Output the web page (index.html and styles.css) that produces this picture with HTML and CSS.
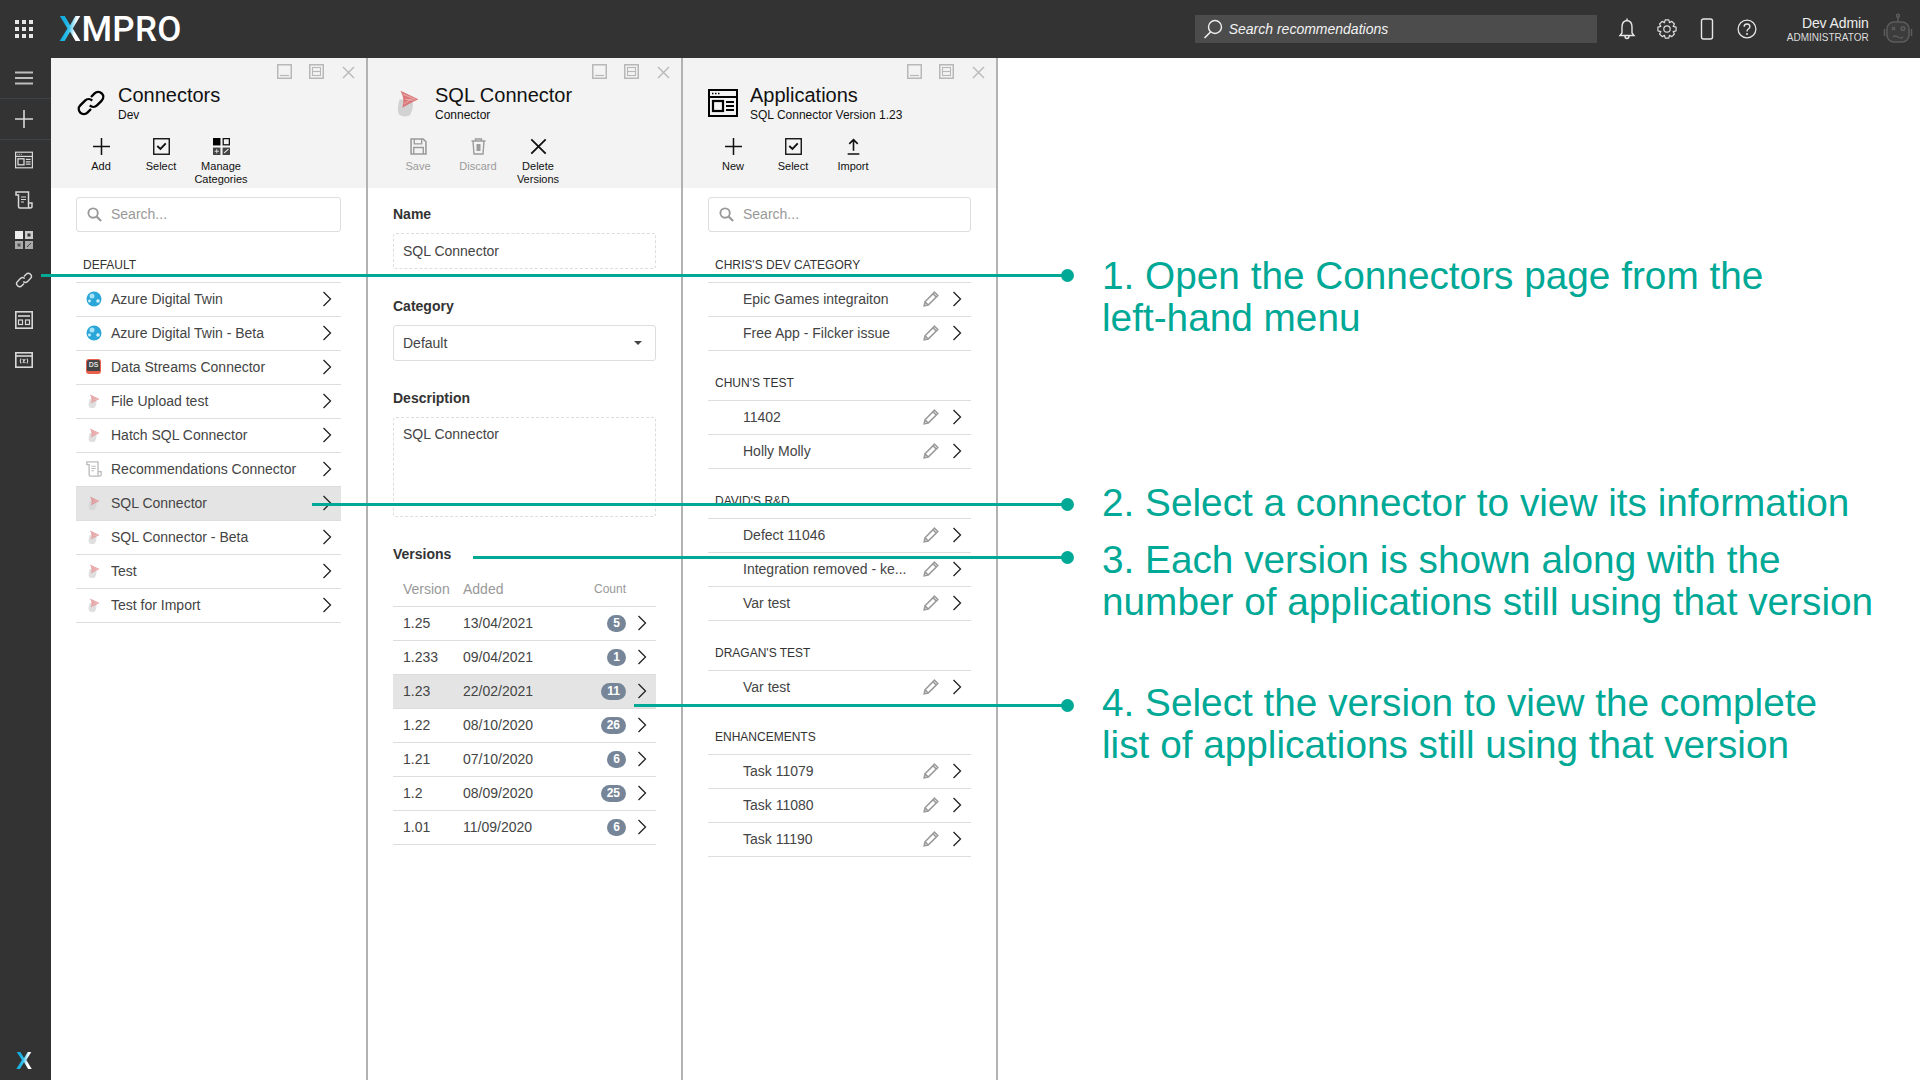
FILE: index.html
```html
<!DOCTYPE html>
<html lang="en">
<head>
<meta charset="utf-8">
<title>Connectors</title>
<link rel="stylesheet" href="styles.css">
</head>
<body>
<svg class="defs" width="0" height="0" aria-hidden="true">
  <symbol id="chev" viewBox="0 0 10 16"><path d="M1.5 1 8.5 8 1.5 15" fill="none" stroke="currentColor" stroke-width="1.3"/></symbol>
  <symbol id="pencil" viewBox="0 0 16 16"><path d="M11.5 1.2 14.8 4.5 5.2 14 1.2 14.8 2 10.8ZM2 10.8 5.2 14M10 2.8 13.2 6" fill="none" stroke="currentColor" stroke-width="1.6"/></symbol>
  <symbol id="mag" viewBox="0 0 16 16"><circle cx="6.5" cy="6.5" r="5" fill="none" stroke="currentColor" stroke-width="2"/><path d="M10.2 10.2 15 15" stroke="currentColor" stroke-width="2.2"/></symbol>
  <symbol id="min" viewBox="0 0 15 15"><rect x=".75" y=".75" width="13.5" height="13.5" fill="none" stroke="currentColor" stroke-width="1.5"/><path d="M3 11.5H12" stroke="currentColor" stroke-width="1.2"/></symbol>
  <symbol id="max" viewBox="0 0 15 15"><rect x=".75" y=".75" width="13.5" height="13.5" fill="none" stroke="currentColor" stroke-width="1.5"/><rect x="3.5" y="3.5" width="8" height="8" fill="none" stroke="currentColor" stroke-width="1.1"/><path d="M3.5 7.5H11.5" stroke="currentColor" stroke-width="1.1"/></symbol>
  <symbol id="close" viewBox="0 0 13 13"><path d="M1 1 12 12M12 1 1 12" stroke="currentColor" stroke-width="1.4"/></symbol>
  <symbol id="plus" viewBox="0 0 18 18"><path d="M9 0V18M0 9H18" stroke="currentColor" stroke-width="1.6"/></symbol>
  <symbol id="check" viewBox="0 0 16 16"><rect x=".7" y=".7" width="14.6" height="14.6" fill="none" stroke="currentColor" stroke-width="1.3"/><path d="M4 7.5 7 10.3 12 5" fill="none" stroke="currentColor" stroke-width="1.8"/></symbol>
  <symbol id="cats" viewBox="0 0 16 16"><rect width="7" height="7"/><rect x="9.6" y=".6" width="5.8" height="5.8" fill="none" stroke="currentColor" stroke-width="1.2"/><rect y="9" width="7" height="7" fill="#444"/><path d="M1.5 12.5H5.5M3.5 10.5V14.5" stroke="#eee" stroke-width=".8"/><rect x="9" y="9" width="7" height="7" fill="#444"/><path d="M10.5 14 14.5 10.5" stroke="#eee" stroke-width="1"/></symbol>
  <symbol id="link" viewBox="0 0 32 32"><g transform="rotate(-45 16 16) translate(16 16) scale(.9) translate(-16 -16)" fill="none" stroke="currentColor" stroke-width="2.8"><path d="M11 21H5a6 6 0 0 1 0-12H13a6 6 0 0 1 6 6"/><path d="M21 11H27a6 6 0 0 1 0 12H19a6 6 0 0 1-6-6"/></g></symbol>
  <symbol id="apps" viewBox="0 0 30 28"><rect x="1" y="1" width="28" height="26" fill="none" stroke="currentColor" stroke-width="2"/><path d="M1 8H29" stroke="currentColor" stroke-width="2"/><path d="M4 4.5H5.5M7 4.5H8.5M10 4.5H11.5" stroke="currentColor" stroke-width="1.5"/><rect x="5" y="12" width="10" height="10" fill="none" stroke="currentColor" stroke-width="2.2"/><path d="M18 13H26M18 17H26M18 21H26" stroke="currentColor" stroke-width="2"/></symbol>
  <symbol id="scroll" viewBox="0 0 18 18"><path d="M1 1H13.5V15.5Q13.5 17 15 17H5Q3.5 17 3.5 15.5V4H1ZM13.5 12H17V15.5Q17 17 15 17" fill="none" stroke="currentColor" stroke-width="1.5"/><path d="M6 6H11M6 8.5H11M6 11H9" stroke="currentColor" stroke-width="1.2"/></symbol>
  <symbol id="tiles" viewBox="0 0 18 18"><rect width="8" height="8" fill="#eee"/><rect x="10" width="8" height="8" fill="#ccc"/><rect x="12.5" y="2.5" width="3" height="3" fill="#333"/><rect y="10" width="8" height="8" fill="#aaa"/><rect x="2.5" y="12.5" width="3" height="3" fill="#555"/><rect x="10" y="10" width="8" height="8" fill="#aaa"/><path d="M12 16 16 12" stroke="#444"/></symbol>
  <symbol id="form" viewBox="0 0 18 18"><rect x=".8" y=".8" width="16.4" height="16.4" fill="none" stroke="currentColor" stroke-width="1.6"/><path d="M3 5H15" stroke="currentColor" stroke-width="1.6"/><rect x="3.5" y="9" width="4" height="4.5" fill="none" stroke="currentColor" stroke-width="1.2"/><rect x="10.5" y="9" width="4" height="4.5" fill="none" stroke="currentColor" stroke-width="1.2"/></symbol>
  <symbol id="vars" viewBox="0 0 18 16"><rect x=".8" y=".8" width="16.4" height="14.4" fill="none" stroke="currentColor" stroke-width="1.6"/><path d="M1 4H17" stroke="currentColor" stroke-width="1.6"/><path d="M6 6.5Q4.5 9 6 11.5M12 6.5Q13.5 9 12 11.5M7.8 7 10.2 11M10.2 7 7.8 11" fill="none" stroke="currentColor" stroke-width="1.1"/></symbol>
  <symbol id="sql" viewBox="0 0 28 32"><path d="M5 12Q2 22 4 28Q9 32 16 29Q20 22 19 14Z" fill="#d2d2d2"/><path d="M6 3 25 12 15 17 8 21Q11 12 6 3Z" fill="#d9777a"/><path d="M9 7 22 12M11 12 20 13M10 17 17 12" stroke="#f3c4c0" stroke-width=".8"/></symbol>
  <symbol id="globe" viewBox="0 0 16 16"><circle cx="8" cy="8" r="7.5" fill="#2aa7d8"/><circle cx="6" cy="5" r="2.5" fill="#a9e2f7"/><circle cx="12" cy="10" r="1.8" fill="#d4f1fb"/><circle cx="3.5" cy="10" r="1.4" fill="#d4f1fb"/></symbol>
  <symbol id="disk" viewBox="0 0 16 16"><path d="M1 1H12.5L15 3.5V15H1Z" fill="none" stroke="currentColor" stroke-width="1.5"/><path d="M4 1V5.5H11V1M3.5 15V9H12.5V15" fill="none" stroke="currentColor" stroke-width="1.3"/></symbol>
  <symbol id="trash" viewBox="0 0 16 17"><path d="M1 3H15M5 3V1H11V3M2.5 3 3.5 16H12.5L13.5 3" fill="none" stroke="currentColor" stroke-width="1.4"/><rect x="6" y="6" width="4" height="7" fill="currentColor"/></symbol>
  <symbol id="upload" viewBox="0 0 16 16"><path d="M8 12V1.5M4 5.5 8 1.5 12 5.5M2.5 15H13.5" fill="none" stroke="currentColor" stroke-width="1.5"/></symbol>
</svg>

<header class="topbar">
  <svg class="grid-icon" viewBox="0 0 18 18"><path d="M0 0h4v4H0zM7 0h4v4H7zM14 0h4v4h-4zM0 7h4v4H0zM7 7h4v4H7zM14 7h4v4h-4zM0 14h4v4H0zM7 14h4v4H7zM14 14h4v4h-4z" fill="#e6e6e6"/></svg>
  <div class="logo"><span class="logo-x">X</span>MPRO</div>
  <div class="top-search">
    <svg class="top-search-icon" viewBox="0 0 20 20"><circle cx="12" cy="8" r="6.5" fill="none" stroke="#eee" stroke-width="1.4"/><path d="M7.5 13 1.5 19" stroke="#eee" stroke-width="1.6"/></svg>
    <span>Search recommendations</span>
  </div>
  <div class="top-icons">
    <svg class="top-icon" viewBox="0 0 20 22"><path d="M10 2.5Q5 3 5 9V15L3 17.5H17L15 15V9Q15 3 10 2.5ZM10 .5V2.5M8 18Q8 20.5 10 20.5T12 18" fill="none" stroke="#e6e6e6" stroke-width="1.4"/></svg>
    <svg class="top-icon" viewBox="0 0 22 22"><path d="M9 1H13L13.7 4 16.3 2.6 19.2 5.5 17.8 8.1 21 9V13L17.8 13.9 19.2 16.5 16.3 19.4 13.7 18 13 21H9L8.3 18 5.7 19.4 2.8 16.5 4.2 13.9 1 13V9L4.2 8.1 2.8 5.5 5.7 2.6 8.3 4Z" fill="none" stroke="#ddd" stroke-width="1.3" stroke-linejoin="round"/><circle cx="11" cy="11" r="3.5" fill="none" stroke="#ddd" stroke-width="1.3"/></svg>
    <svg class="top-icon" viewBox="0 0 20 22"><rect x="4.5" y="1" width="11" height="20" rx="2" fill="none" stroke="#e6e6e6" stroke-width="1.4"/></svg>
    <svg class="top-icon" viewBox="0 0 22 22"><circle cx="11" cy="11" r="9.8" fill="none" stroke="#e6e6e6" stroke-width="1.4"/><path d="M7.8 8.5Q8 5.5 11 5.5T14.2 8.3Q14.2 10 12.5 11 11 12 11 13.8" fill="none" stroke="#e6e6e6" stroke-width="1.5"/><circle cx="11" cy="16.5" r="1.1" fill="#e6e6e6"/></svg>
  </div>
  <div class="user">
    <div class="user-name">Dev Admin</div>
    <div class="user-role">ADMINISTRATOR</div>
  </div>
  <svg class="avatar" viewBox="0 0 30 32"><g fill="none" stroke="#5c5c5c" stroke-width="1.5"><rect x="4" y="9" width="22" height="20" rx="7" fill="#3c3c3c"/><path d="M15 9V4M1.5 16V23M28.5 16V23M10 24Q12 22 15 24T20 24"/><circle cx="15" cy="2.8" r="1.5"/><path d="M9 14 12 17M12 14 9 17"/><circle cx="20" cy="15.5" r="1.8"/></g></svg>
</header>

<div class="main">
  <nav class="sidebar">
    <div class="side-item side-sep"><svg class="side-icon" viewBox="0 0 18 14"><path d="M0 1.5H18M0 7H18M0 12.5H18" stroke="#bdbdbd" stroke-width="2"/></svg></div>
    <div class="side-item side-sep"><svg class="side-icon"><use href="#plus"/></svg></div>
    <div class="side-item"><svg class="side-icon"><use href="#apps"/></svg></div>
    <div class="side-item"><svg class="side-icon"><use href="#scroll"/></svg></div>
    <div class="side-item"><svg class="side-icon"><use href="#tiles"/></svg></div>
    <div class="side-item"><svg class="side-icon"><use href="#link"/></svg></div>
    <div class="side-item"><svg class="side-icon"><use href="#form"/></svg></div>
    <div class="side-item"><svg class="side-icon"><use href="#vars"/></svg></div>
    <div class="side-logo"><span class="logo-x">X</span></div>
  </nav>

  <section class="panel panel-wide">
    <div class="panel-head">
      <div class="win-controls"><svg class="win"><use href="#min"/></svg><svg class="win"><use href="#max"/></svg><svg class="win-x"><use href="#close"/></svg></div>
      <div class="title-row">
        <svg class="title-icon"><use href="#link"/></svg>
        <div><div class="title">Connectors</div><div class="subtitle">Dev</div></div>
      </div>
      <div class="toolbar">
        <div class="tool"><svg class="tool-icon"><use href="#plus"/></svg><span>Add</span></div>
        <div class="tool"><svg class="tool-icon"><use href="#check"/></svg><span>Select</span></div>
        <div class="tool"><svg class="tool-icon"><use href="#cats"/></svg><span>Manage Categories</span></div>
      </div>
    </div>
    <div class="panel-body">
      <div class="search"><svg class="search-icon"><use href="#mag"/></svg><span>Search...</span></div>
      <div class="group-label first">DEFAULT</div>
      <ul class="list">
        <li class="row"><svg class="row-icon"><use href="#globe"/></svg><span class="row-text">Azure Digital Twin</span><svg class="chev"><use href="#chev"/></svg></li>
        <li class="row"><svg class="row-icon"><use href="#globe"/></svg><span class="row-text">Azure Digital Twin - Beta</span><svg class="chev"><use href="#chev"/></svg></li>
        <li class="row"><span class="ds-icon">DS</span><span class="row-text">Data Streams Connector</span><svg class="chev"><use href="#chev"/></svg></li>
        <li class="row"><svg class="row-icon faded"><use href="#sql"/></svg><span class="row-text">File Upload test</span><svg class="chev"><use href="#chev"/></svg></li>
        <li class="row"><svg class="row-icon faded"><use href="#sql"/></svg><span class="row-text">Hatch SQL Connector</span><svg class="chev"><use href="#chev"/></svg></li>
        <li class="row"><svg class="row-icon pale"><use href="#scroll"/></svg><span class="row-text">Recommendations Connector</span><svg class="chev"><use href="#chev"/></svg></li>
        <li class="row selected"><svg class="row-icon faded"><use href="#sql"/></svg><span class="row-text">SQL Connector</span><svg class="chev"><use href="#chev"/></svg></li>
        <li class="row"><svg class="row-icon faded"><use href="#sql"/></svg><span class="row-text">SQL Connector - Beta</span><svg class="chev"><use href="#chev"/></svg></li>
        <li class="row"><svg class="row-icon faded"><use href="#sql"/></svg><span class="row-text">Test</span><svg class="chev"><use href="#chev"/></svg></li>
        <li class="row"><svg class="row-icon faded"><use href="#sql"/></svg><span class="row-text">Test for Import</span><svg class="chev"><use href="#chev"/></svg></li>
      </ul>
    </div>
  </section>

  <section class="panel">
    <div class="panel-head">
      <div class="win-controls"><svg class="win"><use href="#min"/></svg><svg class="win"><use href="#max"/></svg><svg class="win-x"><use href="#close"/></svg></div>
      <div class="title-row">
        <svg class="title-icon"><use href="#sql"/></svg>
        <div><div class="title">SQL Connector</div><div class="subtitle">Connector</div></div>
      </div>
      <div class="toolbar">
        <div class="tool disabled"><svg class="tool-icon"><use href="#disk"/></svg><span>Save</span></div>
        <div class="tool disabled"><svg class="tool-icon"><use href="#trash"/></svg><span>Discard</span></div>
        <div class="tool"><svg class="tool-icon"><use href="#close"/></svg><span>Delete Versions</span></div>
      </div>
    </div>
    <div class="panel-body">
      <label class="field-label first-field">Name</label>
      <div class="input">SQL Connector</div>
      <label class="field-label">Category</label>
      <div class="input select">Default<span class="caret"></span></div>
      <label class="field-label">Description</label>
      <div class="input textarea">SQL Connector</div>
      <label class="field-label">Versions</label>
      <div class="ver-head"><span>Version</span><span>Added</span><span class="ver-count">Count</span></div>
      <div class="list ver-list">
        <div class="ver-row"><span>1.25</span><span>13/04/2021</span><span class="badge">5</span><svg class="chev"><use href="#chev"/></svg></div>
        <div class="ver-row"><span>1.233</span><span>09/04/2021</span><span class="badge">1</span><svg class="chev"><use href="#chev"/></svg></div>
        <div class="ver-row selected"><span>1.23</span><span>22/02/2021</span><span class="badge">11</span><svg class="chev"><use href="#chev"/></svg></div>
        <div class="ver-row"><span>1.22</span><span>08/10/2020</span><span class="badge">26</span><svg class="chev"><use href="#chev"/></svg></div>
        <div class="ver-row"><span>1.21</span><span>07/10/2020</span><span class="badge">6</span><svg class="chev"><use href="#chev"/></svg></div>
        <div class="ver-row"><span>1.2</span><span>08/09/2020</span><span class="badge">25</span><svg class="chev"><use href="#chev"/></svg></div>
        <div class="ver-row"><span>1.01</span><span>11/09/2020</span><span class="badge">6</span><svg class="chev"><use href="#chev"/></svg></div>
      </div>
    </div>
  </section>

  <section class="panel">
    <div class="panel-head">
      <div class="win-controls"><svg class="win"><use href="#min"/></svg><svg class="win"><use href="#max"/></svg><svg class="win-x"><use href="#close"/></svg></div>
      <div class="title-row">
        <svg class="title-icon"><use href="#apps"/></svg>
        <div><div class="title">Applications</div><div class="subtitle">SQL Connector Version 1.23</div></div>
      </div>
      <div class="toolbar">
        <div class="tool"><svg class="tool-icon"><use href="#plus"/></svg><span>New</span></div>
        <div class="tool"><svg class="tool-icon"><use href="#check"/></svg><span>Select</span></div>
        <div class="tool"><svg class="tool-icon"><use href="#upload"/></svg><span>Import</span></div>
      </div>
    </div>
    <div class="panel-body">
      <div class="search"><svg class="search-icon"><use href="#mag"/></svg><span>Search...</span></div>
      <div class="group-label first">CHRIS'S DEV CATEGORY</div>
      <ul class="list">
        <li class="row app"><span class="row-text">Epic Games integraiton</span><svg class="pencil"><use href="#pencil"/></svg><svg class="chev"><use href="#chev"/></svg></li>
        <li class="row app"><span class="row-text">Free App - Filcker issue</span><svg class="pencil"><use href="#pencil"/></svg><svg class="chev"><use href="#chev"/></svg></li>
      </ul>
      <div class="group-label">CHUN'S TEST</div>
      <ul class="list">
        <li class="row app"><span class="row-text">11402</span><svg class="pencil"><use href="#pencil"/></svg><svg class="chev"><use href="#chev"/></svg></li>
        <li class="row app"><span class="row-text">Holly Molly</span><svg class="pencil"><use href="#pencil"/></svg><svg class="chev"><use href="#chev"/></svg></li>
      </ul>
      <div class="group-label">DAVID'S R&amp;D</div>
      <ul class="list">
        <li class="row app"><span class="row-text">Defect 11046</span><svg class="pencil"><use href="#pencil"/></svg><svg class="chev"><use href="#chev"/></svg></li>
        <li class="row app"><span class="row-text">Integration removed - ke...</span><svg class="pencil"><use href="#pencil"/></svg><svg class="chev"><use href="#chev"/></svg></li>
        <li class="row app"><span class="row-text">Var test</span><svg class="pencil"><use href="#pencil"/></svg><svg class="chev"><use href="#chev"/></svg></li>
      </ul>
      <div class="group-label">DRAGAN'S TEST</div>
      <ul class="list">
        <li class="row app"><span class="row-text">Var test</span><svg class="pencil"><use href="#pencil"/></svg><svg class="chev"><use href="#chev"/></svg></li>
      </ul>
      <div class="group-label">ENHANCEMENTS</div>
      <ul class="list">
        <li class="row app"><span class="row-text">Task 11079</span><svg class="pencil"><use href="#pencil"/></svg><svg class="chev"><use href="#chev"/></svg></li>
        <li class="row app"><span class="row-text">Task 11080</span><svg class="pencil"><use href="#pencil"/></svg><svg class="chev"><use href="#chev"/></svg></li>
        <li class="row app"><span class="row-text">Task 11190</span><svg class="pencil"><use href="#pencil"/></svg><svg class="chev"><use href="#chev"/></svg></li>
      </ul>
    </div>
  </section>
</div>

<div class="callout-line line-1"></div>
<div class="callout-line line-2"></div>
<div class="callout-line line-3"></div>
<div class="callout-line line-4"></div>
<p class="callout text-1">1. Open the Connectors page from the<br>left-hand menu</p>
<p class="callout text-2">2. Select a connector to view its information</p>
<p class="callout text-3">3. Each version is shown along with the<br>number of applications still using that version</p>
<p class="callout text-4">4. Select the version to view the complete<br>list of applications still using that version</p>
</body>
</html>
```

FILE: styles.css
```css
* { box-sizing: border-box; }
html, body { margin: 0; height: 100%; }
body {
  position: relative;
  width: 1920px;
  height: 1080px;
  overflow: hidden;
  display: flex;
  flex-direction: column;
  background: #fff;
  color: #444;
  font-family: "Liberation Sans", Arial, sans-serif;
  font-size: 14px;
}
.defs { position: absolute; }
ul { margin: 0; padding: 0; list-style: none; }

/* top bar */
.topbar {
  flex: 0 0 58px;
  display: flex;
  align-items: center;
  background: #333;
  color: #eee;
}
.grid-icon { width: 18px; height: 18px; margin-left: 15px; }
.logo {
  margin-left: 26px;
  font-family: Roboto, "Liberation Sans", sans-serif;
  font-size: 35px;
  font-weight: 500;
  letter-spacing: 0.3px;
  color: #fff;
  line-height: 1;
}
.logo-x {
  background: linear-gradient(100deg, #12aee0 25%, #30c0ec 45%, #fff 68%);
  -webkit-background-clip: text;
  background-clip: text;
  color: transparent;
}
.top-search {
  width: 402px;
  height: 28px;
  margin-left: 1013px;
  padding-left: 8px;
  display: flex;
  align-items: center;
  gap: 6px;
  background: #4c4c4c;
  font-style: italic;
  color: #f2f2f2;
}
.top-search-icon { width: 20px; height: 20px; }
.top-icons { display: flex; gap: 20px; margin-left: 20px; }
.top-icon { width: 20px; height: 22px; }
.user { width: 112px; text-align: right; }
.user-name { font-size: 14px; line-height: 16px; letter-spacing: -0.1px; color: #eee; }
.user-role { font-size: 10px; line-height: 12px; color: #ddd; margin-top: 1px; }
.avatar { width: 30px; height: 32px; margin-left: 14px; }

/* layout */
.main { flex: 1; display: flex; min-height: 0; }
.sidebar {
  flex: 0 0 51px;
  display: flex;
  flex-direction: column;
  background: #333;
  color: #d8d8d8;
}
.side-item { height: 40px; display: flex; align-items: center; justify-content: center; padding-right: 3px; }
.side-sep { height: 41px; border-bottom: 1px solid #3d4247; }
.side-icon { width: 18px; height: 18px; }
.side-logo {
  margin-top: auto;
  padding: 0 3px 5px 0;
  text-align: center;
  font-size: 24px;
  font-weight: 700;
  line-height: 28px;
}

/* panels */
.panel {
  flex: 0 0 315px;
  display: flex;
  flex-direction: column;
  border-right: 2px solid #b2b2b2;
}
.panel-wide { flex-basis: 317px; }
.panel-head { height: 130px; padding-top: 6px; background: #f3f3f3; }
.win-controls {
  height: 15px;
  display: flex;
  align-items: center;
  justify-content: flex-end;
  padding-right: 10px;
  color: #b8b8b8;
}
.win { width: 15px; height: 15px; margin-right: 18px; }
.win:first-child { margin-right: 17px; }
.win-x { width: 13px; height: 13px; margin-top: 2px; margin-right: 1px; }
.title-row {
  display: flex;
  align-items: center;
  gap: 12px;
  margin-top: 4px;
  padding-left: 25px;
  color: #000;
}
.title-icon { width: 30px; height: 30px; flex: none; }
.title { font-size: 20px; line-height: 24px; color: #111; }
.subtitle { font-size: 12px; line-height: 14px; color: #111; margin-top: 1px; }
.toolbar { display: flex; margin-top: 16px; padding-left: 20px; }
.tool {
  width: 60px;
  display: flex;
  flex-direction: column;
  align-items: center;
  font-size: 11px;
  line-height: 13px;
  text-align: center;
  color: #111;
}
.tool-icon { width: 17px; height: 17px; margin-bottom: 5px; }
.tool.disabled { color: #9b9b9b; }

.panel-body { padding: 9px 25px 0 25px; }
.search {
  height: 35px;
  display: flex;
  align-items: center;
  gap: 9px;
  padding: 0 0 1px 10px;
  border: 1px solid #ddd;
  border-radius: 3px;
  color: #999;
}
.search-icon { width: 15px; height: 15px; color: #999; }
.group-label {
  padding-left: 7px;
  margin-top: 25px;
  height: 24px;
  line-height: 14px;
  font-size: 12px;
  color: #333;
}
.group-label.first { margin-top: 26px; }
.list { border-top: 1px solid #ddd; }
.row, .ver-row {
  height: 34px;
  display: flex;
  align-items: center;
  border-bottom: 1px solid #ddd;
}
.row { padding: 0 9px 2px 10px; }
.selected { background: #e4e4e4; }
.row-icon { width: 16px; height: 16px; margin-right: 9px; flex: none; }
.ds-icon {
  flex: none;
  width: 15px;
  height: 15px;
  margin-right: 10px;
  border: 1px solid #e8604c;
  border-bottom-width: 3px;
  border-radius: 3px;
  background: #444;
  color: #ddd;
  font-size: 7px;
  font-weight: 700;
  line-height: 10px;
  text-align: center;
}
.faded { opacity: .7; }
.pale { color: #bbb; }
.row-text { flex: 1; white-space: nowrap; }
.chev { width: 10px; height: 16px; flex: none; color: #222; }
.row.app { padding-left: 35px; }
.pencil { width: 16px; height: 16px; margin-right: 13px; color: #999; flex: none; }

/* form */
.field-label { display: block; margin-top: 29px; height: 17px; line-height: 17px; font-weight: 700; color: #333; }
.field-label.first-field { margin-top: 9px; }
.input {
  height: 36px;
  margin-top: 10px;
  padding: 0 9px;
  line-height: 34px;
  border: 1px dashed #ddd;
  border-radius: 3px;
}
.select { position: relative; border-style: solid; }
.caret {
  position: absolute;
  right: 13px;
  top: 15px;
  border: 4px solid transparent;
  border-top-color: #444;
  border-bottom-width: 0;
}
.textarea { height: 100px; line-height: 16px; padding-top: 8px; }
.ver-head {
  display: flex;
  align-items: center;
  height: 34px;
  margin-top: 9px;
  padding: 0 30px 0 10px;
  color: #999;
}
.ver-head span:first-child { width: 60px; }
.ver-count { margin-left: auto; font-size: 12px; }
.ver-row { padding: 0 9px 1px 10px; }
.ver-row span:first-child { width: 60px; }
.badge {
  margin-left: auto;
  margin-right: 11px;
  min-width: 19px;
  height: 17px;
  padding: 0 6px;
  border-radius: 9px;
  background: #768698;
  color: #fff;
  font-size: 12px;
  font-weight: 700;
  line-height: 16px;
  text-align: center;
}

/* callouts */
.callout {
  position: absolute;
  left: 1102px;
  margin: 0;
  font-size: 38.75px;
  line-height: 42px;
  color: #00a896;
  white-space: nowrap;
}
.text-1 { top: 255px; }
.text-2 { top: 482px; }
.text-3 { top: 539px; }
.text-4 { top: 682px; }
.callout-line {
  position: absolute;
  height: 3px;
  background: #00a896;
  right: 852px;
}
.callout-line::after {
  content: "";
  position: absolute;
  right: -6px;
  top: -5px;
  width: 13px;
  height: 13px;
  border-radius: 50%;
  background: #00a896;
}
.line-1 { top: 274px; left: 41px; }
.line-2 { top: 503px; left: 312px; }
.line-3 { top: 556px; left: 473px; }
.line-4 { top: 704px; left: 634px; }
```
